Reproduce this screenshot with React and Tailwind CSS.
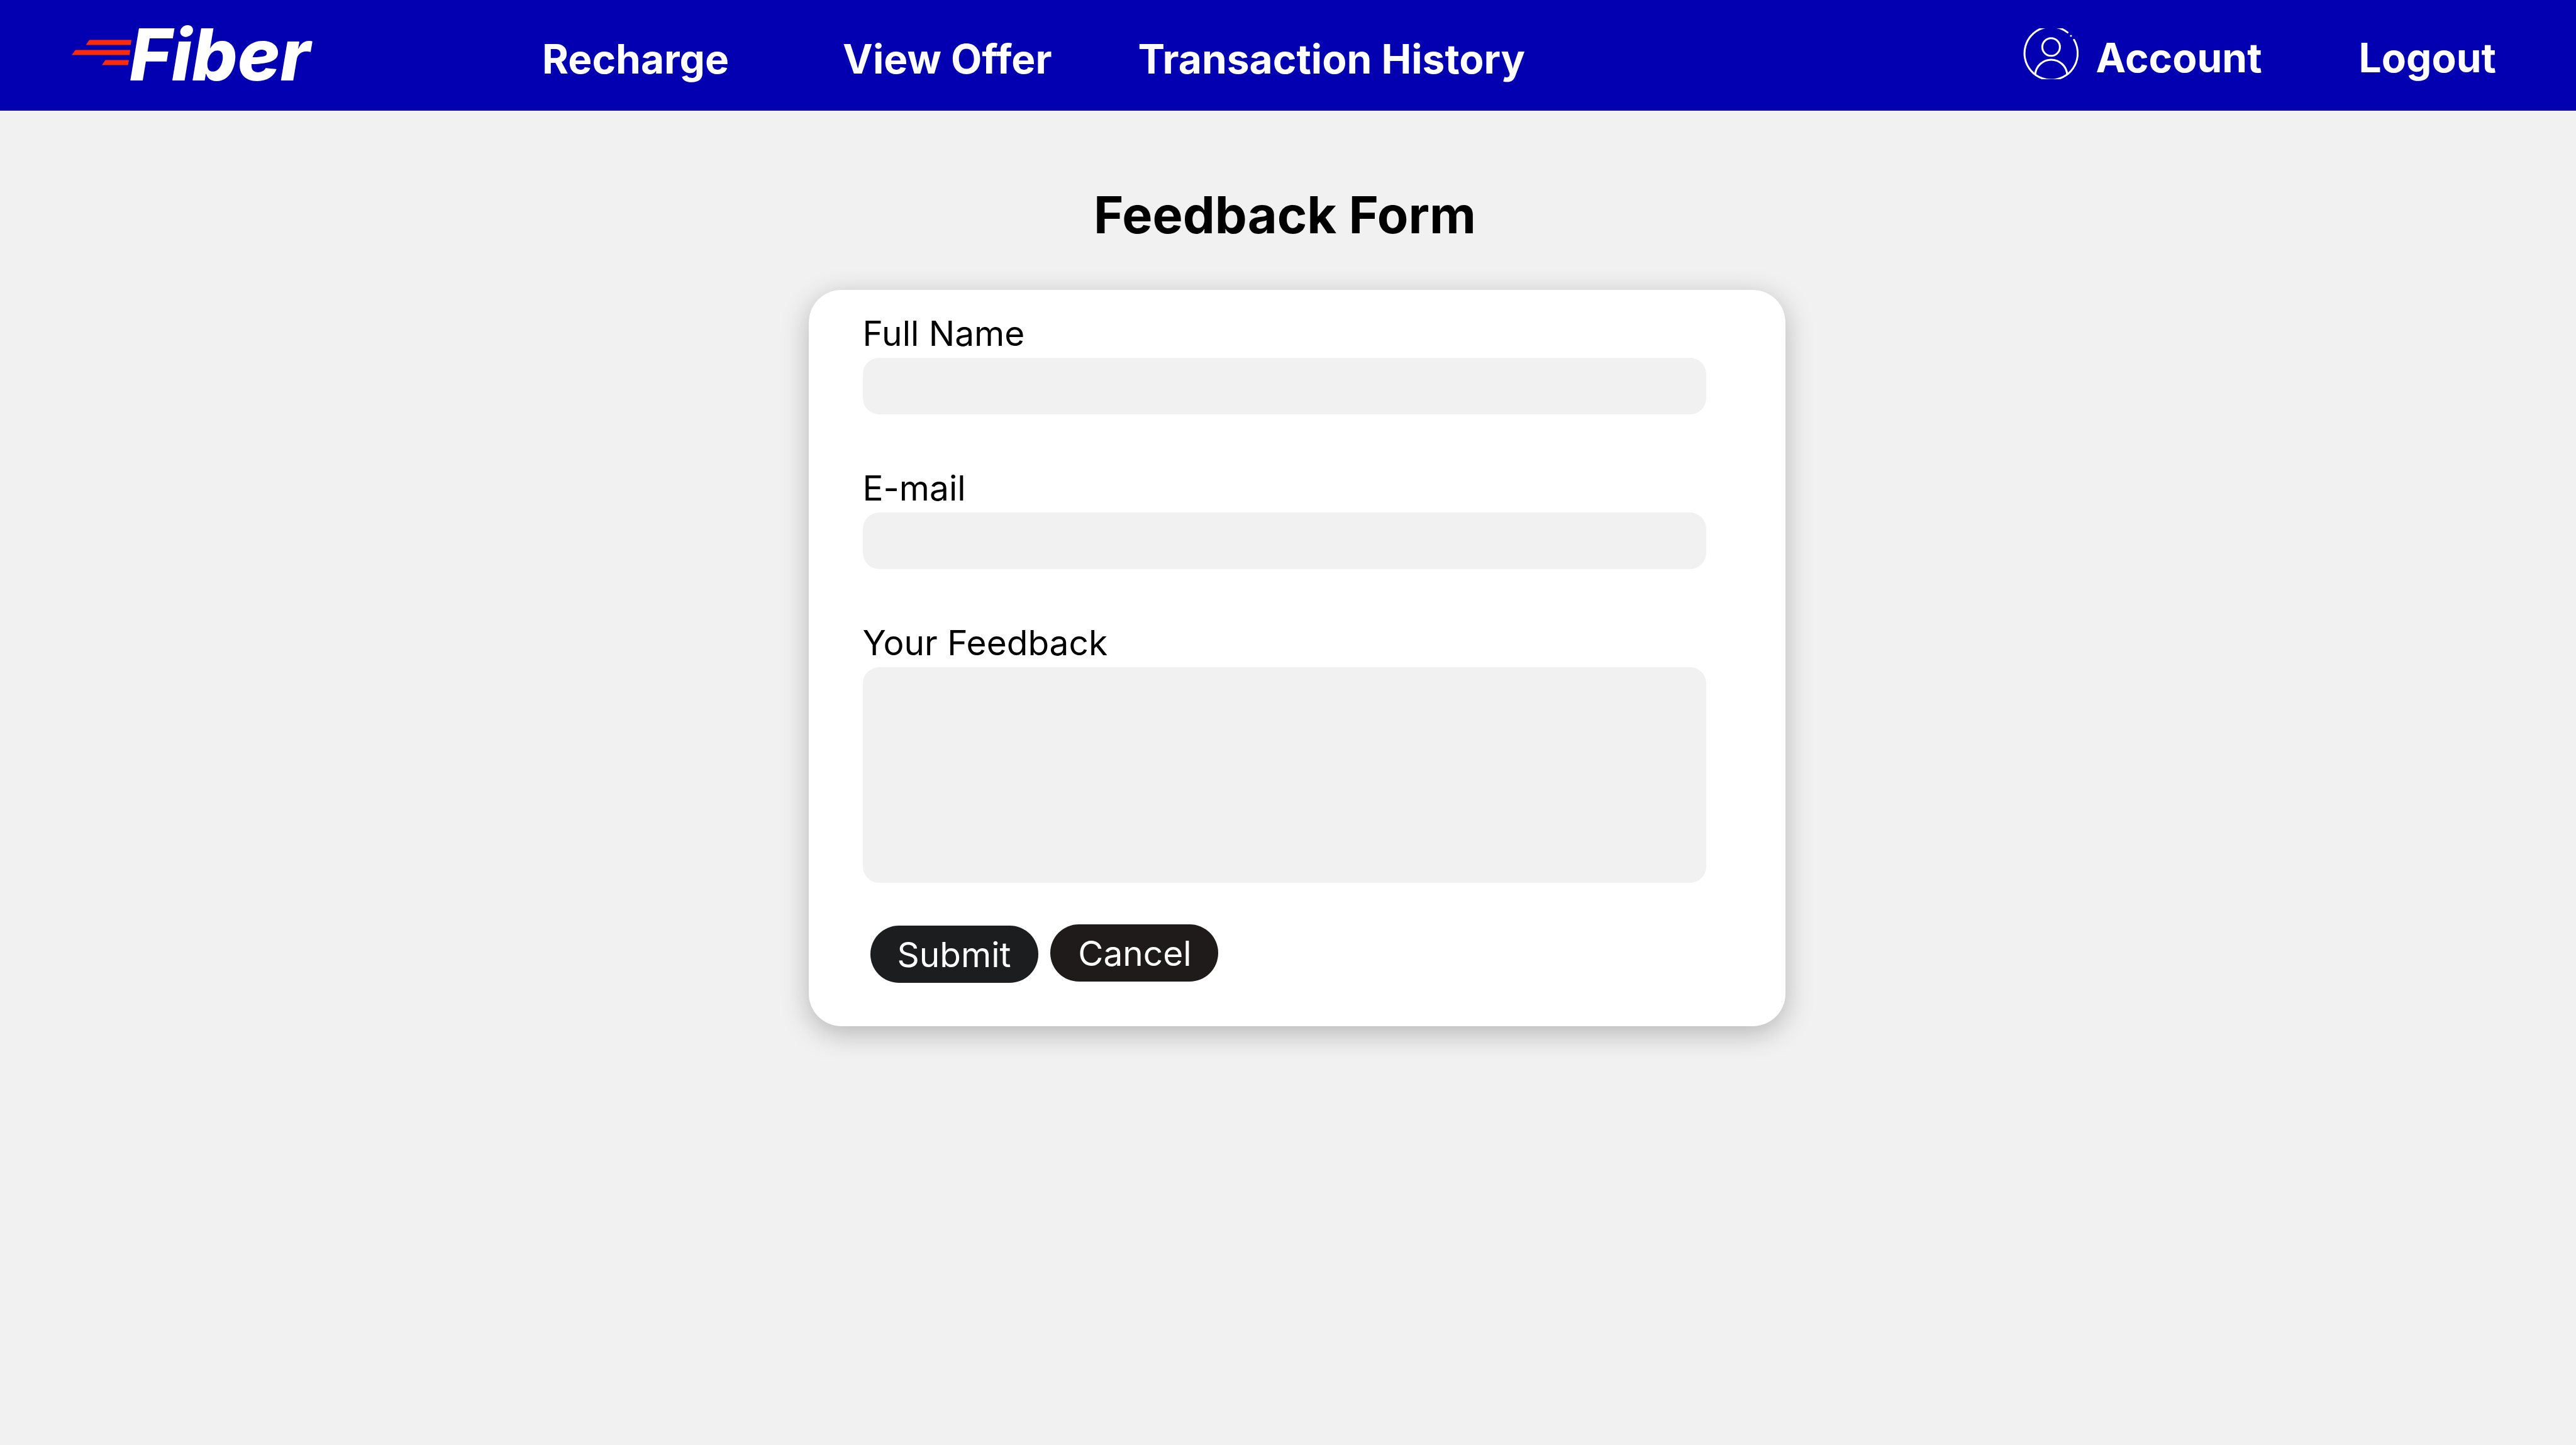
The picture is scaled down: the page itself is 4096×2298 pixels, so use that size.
import React from "react";

const navLink = "text-[64px] leading-[80px] font-bold text-white whitespace-nowrap";
const labelText = "block pb-[6px] text-[55px] leading-[66px] text-black";
const field = "block w-full rounded-[26px] bg-[#f1f1f1] px-8 text-[48px] outline-none";
const pill =
  "flex h-[91px] w-[267px] items-center justify-center rounded-full text-[55px] leading-[66px] text-white";

function Logo() {
  return (
    <a href="#home" aria-label="Fiber home">
      <svg width="380" height="100" viewBox="0 0 380 100" className="overflow-visible">
        <g fill="#ff2a06">
          <path d="M28 25.500H95L94 33.500H22.500Z" />
          <path d="M6 41.500H93L92 49.500H0Z" />
          <path d="M53.500 57.500H91L89.500 65.500H48Z" />
        </g>
        <text x="92" y="90" fill="#fff" className="text-[114px] font-extrabold italic">
          Fiber
        </text>
      </svg>
    </a>
  );
}

function AccountIcon() {
  return (
    <svg
      width="88"
      height="81"
      viewBox="54 54 345 318"
      fill="none"
      stroke="#fff"
      strokeWidth="12"
      strokeLinecap="round"
      aria-hidden="true"
      className="mb-[14px]"
    >
      <path d="M331 80A166 166 0 1 0 371 126" />
      <circle cx="228" cy="171" r="55" />
      <path d="M129 340A100 100 0 0 1 328 340" />
      <circle cx="352" cy="101" r="6" fill="#fff" stroke="none" />
    </svg>
  );
}

export default function App() {
  return (
    <div className="min-h-screen bg-[#f1f1f1] font-['Inter',sans-serif]">
      <header className="flex h-[176px] items-center bg-[#0200b0] pl-[114px] pr-[127px]">
        <Logo />
        <nav className="ml-[368px] flex pt-3">
          <a href="#recharge" className={navLink}>Recharge</a>
          <a href="#offers" className={`${navLink} ml-[181px]`}>View Offer</a>
          <a href="#history" className={`${navLink} ml-[137px]`}>Transaction History</a>
        </nav>
        <div className="ml-auto flex items-center pt-2">
          <a href="#account" className="flex items-center gap-7">
            <AccountIcon />
            <span className={navLink}>Account</span>
          </a>
          <a href="#logout" className={`${navLink} ml-[154px]`}>Logout</a>
        </div>
      </header>

      <main className="flex flex-col items-center pt-[116px]">
        <h1 className="mr-[10px] text-[81px] leading-[100px] font-bold text-black">Feedback Form</h1>
        <form
          className="ml-[28px] mt-[69px] w-[1553px] rounded-[52px] bg-white pb-[69px] pl-[86px] pr-[126px] pt-[36px] shadow-[0_11px_44px_rgba(0,0,0,0.25)]"
          onSubmit={(e) => e.preventDefault()}
        >
          <label htmlFor="name" className={labelText}>Full Name</label>
          <input id="name" type="text" className={`${field} h-[90px]`} />
          <label htmlFor="email" className={`${labelText} mt-[84px]`}>E-mail</label>
          <input id="email" type="email" className={`${field} h-[90px]`} />
          <label htmlFor="feedback" className={`${labelText} mt-[84px]`}>Your Feedback</label>
          <textarea id="feedback" className={`${field} h-[343px] resize-none py-6`} />
          <div className="mt-[66px] flex gap-[19px] pl-3">
            <button type="submit" className={`${pill} mt-[2px] bg-[#1b1d1f]`}>Submit</button>
            <button type="button" className={`${pill} bg-[#1f1b1a] pl-[3px]`}>Cancel</button>
          </div>
        </form>
      </main>
    </div>
  );
}
